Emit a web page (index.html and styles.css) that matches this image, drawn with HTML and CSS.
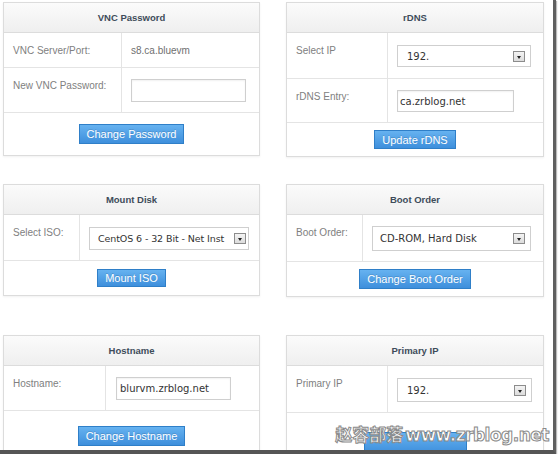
FILE: index.html
```html
<!DOCTYPE html>
<html lang="en">
  <head>
    <meta charset="UTF-8" />
    <title>VPS Control Panel</title>
    <link rel="stylesheet" href="styles.css">
  </head>
  <body>
    <div class="frame">
      <div class="panels">
        <!-- VNC -->
        <div class="panel panel-vnc">
          <div class="panel-header">VNC Password</div>
          <div class="row row-a">
            <div class="cell-label">VNC Server/Port:</div>
            <div class="cell-field cell-value">s8.ca.bluevm</div>
          </div>
          <div class="row row-b">
            <div class="cell-label">New VNC Password:</div>
            <div class="cell-field"><input type="password" class="text-input" /></div>
          </div>
          <div class="panel-footer">
            <button class="btn">Change Password</button>
          </div>
        </div>

        <!-- rDNS -->
        <div class="panel panel-rdns">
          <div class="panel-header">rDNS</div>
          <div class="row row-a">
            <div class="cell-label">Select IP</div>
            <div class="cell-field">
              <div class="select-box"><span>192.</span><span class="select-arrow"></span></div>
            </div>
          </div>
          <div class="row row-b">
            <div class="cell-label">rDNS Entry:</div>
            <div class="cell-field"><input type="text" class="text-input" value="ca.zrblog.net" /></div>
          </div>
          <div class="panel-footer">
            <button class="btn">Update rDNS</button>
          </div>
        </div>

        <!-- Mount -->
        <div class="panel panel-mount">
          <div class="panel-header">Mount Disk</div>
          <div class="row row-a">
            <div class="cell-label">Select ISO:</div>
            <div class="cell-field">
              <div class="select-box"><span>CentOS 6 - 32 Bit - Net Inst</span><span class="select-arrow"></span></div>
            </div>
          </div>
          <div class="panel-footer">
            <button class="btn">Mount ISO</button>
          </div>
        </div>

        <!-- Boot -->
        <div class="panel panel-boot">
          <div class="panel-header">Boot Order</div>
          <div class="row row-a">
            <div class="cell-label">Boot Order:</div>
            <div class="cell-field">
              <div class="select-box"><span>CD-ROM, Hard Disk</span><span class="select-arrow"></span></div>
            </div>
          </div>
          <div class="panel-footer">
            <button class="btn">Change Boot Order</button>
          </div>
        </div>

        <!-- Hostname -->
        <div class="panel panel-host">
          <div class="panel-header">Hostname</div>
          <div class="row row-a">
            <div class="cell-label">Hostname:</div>
            <div class="cell-field"><input type="text" class="text-input" value="blurvm.zrblog.net" /></div>
          </div>
          <div class="panel-footer">
            <button class="btn">Change Hostname</button>
          </div>
        </div>

        <!-- Primary IP -->
        <div class="panel panel-primary">
          <div class="panel-header">Primary IP</div>
          <div class="row row-a">
            <div class="cell-label">Primary IP</div>
            <div class="cell-field">
              <div class="select-box"><span>192.</span><span class="select-arrow"></span></div>
            </div>
          </div>
          <div class="panel-footer">
            <button class="btn btn-hidden"></button>
          </div>
        </div>
      </div>

      <div class="watermark"><span class="wm-cn">赵容部落</span><span class="wm-url">www.zrblog.net</span></div>
    </div>
  </body>
</html>
```

FILE: styles.css
```css
* {
  margin: 0;
  padding: 0;
  box-sizing: border-box;
}

body {
  background: #fff;
  font-family: "Liberation Sans", Arial, sans-serif;
  color: #777;
}

.frame {
  position: relative;
  width: 556px;
  height: 454px;
  padding: 2px 0 0 3px;
  overflow: hidden;
  border-right: 3px solid #5f5f5f;
  border-bottom: 4px solid #555;
  box-shadow: 1px 1px 1px #bbb;
}

.panels {
  display: grid;
  grid-template-columns: 257px 258px;
  grid-template-rows: 182px 151px auto;
  column-gap: 26px;
  align-items: start;
}

.panel {
  background: #fff;
  border: 1px solid #dcdcdc;
  box-shadow: 0 1px 2px rgba(0, 0, 0, 0.06);
}

.panel-header {
  height: 30px;
  line-height: 29px;
  text-align: center;
  font-size: 9.5px;
  font-weight: bold;
  color: #3e4c5a;
  background: linear-gradient(#fbfbfb, #efefef);
  border-bottom: 1px solid #dcdcdc;
}

.row {
  display: grid;
  border-bottom: 1px solid #e4e4e4;
}

.cell-label {
  padding: 12px 0 0 9px;
  font-size: 10px;
  line-height: 12px;
  color: #808080;
  border-right: 1px solid #e4e4e4;
}

.cell-field {
  padding: 11px 0 0 9px;
}

.cell-value {
  padding-top: 12px;
  font-size: 10px;
  line-height: 12px;
  color: #707070;
}

.text-input {
  display: block;
  width: 115px;
  height: 23px;
  padding: 0 3px;
  border: 1px solid #cfcfcf;
  box-shadow: inset 0 1px 2px rgba(0, 0, 0, 0.06);
  font-family: "DejaVu Sans", Verdana, sans-serif;
  font-size: 10px;
  color: #333;
  outline: none;
}

.select-box {
  display: flex;
  align-items: center;
  justify-content: space-between;
  height: 23px;
  padding: 0 5px 0 9px;
  border: 1px solid #cfcfcf;
  background: #fff;
  font-family: "DejaVu Sans", Verdana, sans-serif;
  font-size: 10px;
  color: #333;
  white-space: nowrap;
  overflow: hidden;
}

.select-arrow {
  position: relative;
  flex: none;
  width: 12px;
  height: 11px;
  border: 1px solid #8c8c8c;
  background: linear-gradient(#f4f4f4, #dcdcdc);
}

.select-arrow::after {
  content: "";
  position: absolute;
  left: 3px;
  top: 4px;
  border-left: 2.5px solid transparent;
  border-right: 2.5px solid transparent;
  border-top: 3px solid #222;
}

.panel-footer {
  display: flex;
  justify-content: center;
  align-items: center;
}

.btn {
  height: 20px;
  padding: 0 7px;
  border: 1px solid #2f7fc8;
  background: linear-gradient(#66b2f0, #3e8fdc);
  color: #fff;
  font-family: "Liberation Sans", Arial, sans-serif;
  font-size: 11px;
  text-shadow: 0 -1px 0 rgba(0, 0, 0, 0.15);
  cursor: pointer;
}

/* panel sizes */
.panel-vnc .row { grid-template-columns: 118px 1fr; }
.panel-vnc .row-a { height: 35px; }
.panel-vnc .row-b { height: 45px; }
.panel-vnc .panel-footer { height: 42px; }

.panel-rdns .row { grid-template-columns: 101px 1fr; }
.panel-rdns .row-a { height: 46px; }
.panel-rdns .row-a .cell-field { padding-top: 12px; }
.panel-rdns .row-b { height: 44px; }
.panel-rdns .select-box { width: 134px; height: 22px; }
.panel-rdns .text-input { width: 117px; height: 22px; padding-left: 2px; }
.panel-rdns .panel-footer { height: 33px; }
.panel-rdns .btn { height: 19px; }

.panel-mount .row { grid-template-columns: 76px 1fr; }
.panel-mount .row-a { height: 46px; }
.panel-mount .row-a .cell-field { padding-top: 12px; }
.panel-mount .select-box { width: 160px; padding: 0 2px 0 8px; font-size: 9.5px; letter-spacing: -0.1px; }
.panel-mount .panel-footer { height: 34px; }
.panel-mount .btn { height: 18px; }

.panel-boot .row { grid-template-columns: 76px 1fr; }
.panel-boot .row-a { height: 47px; }
.panel-boot .select-box { width: 159px; height: 25px; padding-left: 7px; }
.panel-boot .panel-footer { height: 34px; }

.panel-host .row { grid-template-columns: 102px 1fr; }
.panel-host .row-a { height: 45px; }
.panel-host .cell-field { padding-left: 10px; }
.panel-host .panel-footer { height: 50px; }

.panel-primary .row { grid-template-columns: 101px 1fr; }
.panel-primary .row-a { height: 47px; }
.panel-primary .row-a .cell-field { padding-top: 12px; }
.panel-primary .select-box { width: 135px; height: 24px; }
.panel-primary .panel-footer { height: 50px; }
.panel-primary .btn-hidden { width: 103px; height: 22px; margin-top: 10px; }

.watermark {
  position: absolute;
  right: 4px;
  bottom: 4px;
  display: flex;
  align-items: baseline;
  gap: 2px;
  color: #fff;
  -webkit-text-stroke: 1px #8a8a8a;
  font-weight: bold;
  white-space: nowrap;
}

.wm-cn {
  font-family: "Noto Sans CJK SC", sans-serif;
  font-size: 17px;
}

.wm-url {
  font-family: "DejaVu Sans", sans-serif;
  font-size: 17px;
  letter-spacing: -0.5px;
}
```
